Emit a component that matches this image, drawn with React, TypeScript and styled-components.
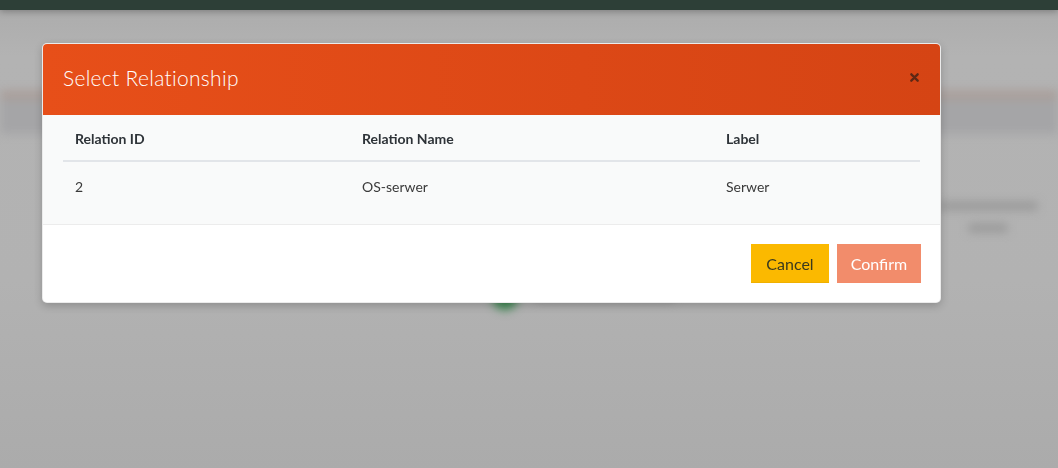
import React from "react"
import styled, { createGlobalStyle } from "styled-components"

const GlobalStyle = createGlobalStyle`
  html, body {
    margin: 0;
    padding: 0;
    height: 100%;
    overflow: hidden;
  }
  body {
    background: #b1b1b1;
    font-family: "Lato", "Open Sans", sans-serif;
  }
`

interface Relation {
  id: number
  name: string
  label: string
}

const rows: Relation[] = [{ id: 2, name: "OS-serwer", label: "Serwer" }]

export default function App() {
  return (
    <>
      <GlobalStyle />
      <Page>
        <TopBar />
        <Blurred>
          <SubHeader />
          <NavBand />
          <Content>
            <SideInfo>
              <Blob w={100} />
              <Blob w={40} />
            </SideInfo>
            <StatusRow>
              <Dot />
              <Blob w={140} />
            </StatusRow>
          </Content>
        </Blurred>
      </Page>

      <Overlay>
        <Modal>
          <Header>
            <Title>Select Relationship</Title>
            <Close aria-label="close">
              <svg width="9" height="9" viewBox="0 0 10 10">
                <path d="M1.5 1.5 L8.5 8.5 M8.5 1.5 L1.5 8.5" stroke="currentColor" strokeWidth="2.6" strokeLinecap="round" />
              </svg>
            </Close>
          </Header>
          <Body>
            <Table>
              <colgroup>
                <col style={{ width: 287 }} />
                <col style={{ width: 364 }} />
                <col />
              </colgroup>
              <thead>
                <tr>
                  <Th>Relation ID</Th>
                  <Th>Relation Name</Th>
                  <Th>Label</Th>
                </tr>
              </thead>
              <tbody>
                {rows.map((r) => (
                  <tr key={r.id}>
                    <Td>{r.id}</Td>
                    <Td>{r.name}</Td>
                    <Td>{r.label}</Td>
                  </tr>
                ))}
              </tbody>
            </Table>
          </Body>
          <Footer>
            <Button variant="cancel">Cancel</Button>
            <Button variant="confirm">Confirm</Button>
          </Footer>
        </Modal>
      </Overlay>
    </>
  )
}

// Styled
const Page = styled.div`
  height: 468px;
  background: linear-gradient(#ababab, #b3b3b3 12%, #b2b2b2 60%, #ababab);
`

const TopBar = styled.div`
  height: 10px;
  background: #2d3f37;
  box-shadow: 0 2px 6px rgba(0, 0, 0, 0.25);
`

const Blurred = styled.div`
  filter: blur(5px);
  padding-top: 80px;
`

const SubHeader = styled.div`
  height: 10px;
  background: #aa9f9b;
`

const NavBand = styled.div`
  height: 34px;
  background: #a5a5a7;
`

const Content = styled.div`
  display: flex;
  flex-direction: column;
`

const SideInfo = styled.div`
  display: flex;
  flex-direction: column;
  align-items: center;
  gap: 14px;
  align-self: flex-end;
  width: 120px;
  margin: 68px 10px 0 0;
`

const Blob = styled.div<{ w: number }>`
  width: ${(p) => p.w}px;
  height: 8px;
  border-radius: 4px;
  background: #979797;
`

const StatusRow = styled.div`
  display: flex;
  align-items: center;
  gap: 16px;
  margin: 52px 0 0 492px;
`

const Dot = styled.div`
  width: 26px;
  height: 26px;
  border-radius: 50%;
  background: #3d8a52;
`

const Overlay = styled.div`
  position: fixed;
  inset: 0;
  padding: 43px 0 0 42px;
`

const Modal = styled.div`
  width: 899px;
  background: #fff;
  border-radius: 5px;
  overflow: hidden;
  box-shadow: 0 3px 9px rgba(0, 0, 0, 0.2);
  border: 1px solid rgba(0, 0, 0, 0.08);
  box-sizing: border-box;
`

const Header = styled.div`
  height: 71px;
  box-sizing: border-box;
  display: flex;
  align-items: center;
  justify-content: space-between;
  padding: 0 20px 4px;
  background: linear-gradient(90deg, #e74f19 0%, #dc4816 60%, #d54414 100%);
`

const Title = styled.h4`
  margin: 0;
  color: #fff;
  font-size: 21px;
  font-weight: 300;
  letter-spacing: 0.3px;
`

const Close = styled.span`
  display: flex;
  color: #5e2815;
  margin-right: 1px;
`

const Body = styled.div`
  background: #f9fafa;
  padding: 0 20px 17px;
  border-bottom: 1px solid #ececec;
`

const Table = styled.table`
  width: 100%;
  border-collapse: collapse;
  table-layout: fixed;
`

const Th = styled.th`
  text-align: left;
  font-size: 14px;
  font-weight: 700;
  color: #2e3338;
  padding: 15px 12px 13px;
  border-bottom: 2px solid #e2e5e9;
`

const Td = styled.td`
  font-size: 14px;
  font-weight: 400;
  color: #3a3a3a;
  padding: 16px 12px 12px;
`

const Footer = styled.div`
  display: flex;
  justify-content: flex-end;
  gap: 8px;
  padding: 19px 19px 19px 20px;
`

const Button = styled.button<{ variant: "cancel" | "confirm" }>`
  width: ${(p) => (p.variant === "cancel" ? 78 : 84)}px;
  height: 39px;
  padding: 0;
  border: none;
  border-radius: 0;
  font-family: inherit;
  font-size: 16px;
  cursor: pointer;
  background: ${(p) => (p.variant === "cancel" ? "#fbb900" : "#f28c6b")};
  color: ${(p) => (p.variant === "cancel" ? "#3a3a1e" : "#fff")};
  border-bottom: 1px solid ${(p) => (p.variant === "cancel" ? "#f0b000" : "#f48a68")};
`
